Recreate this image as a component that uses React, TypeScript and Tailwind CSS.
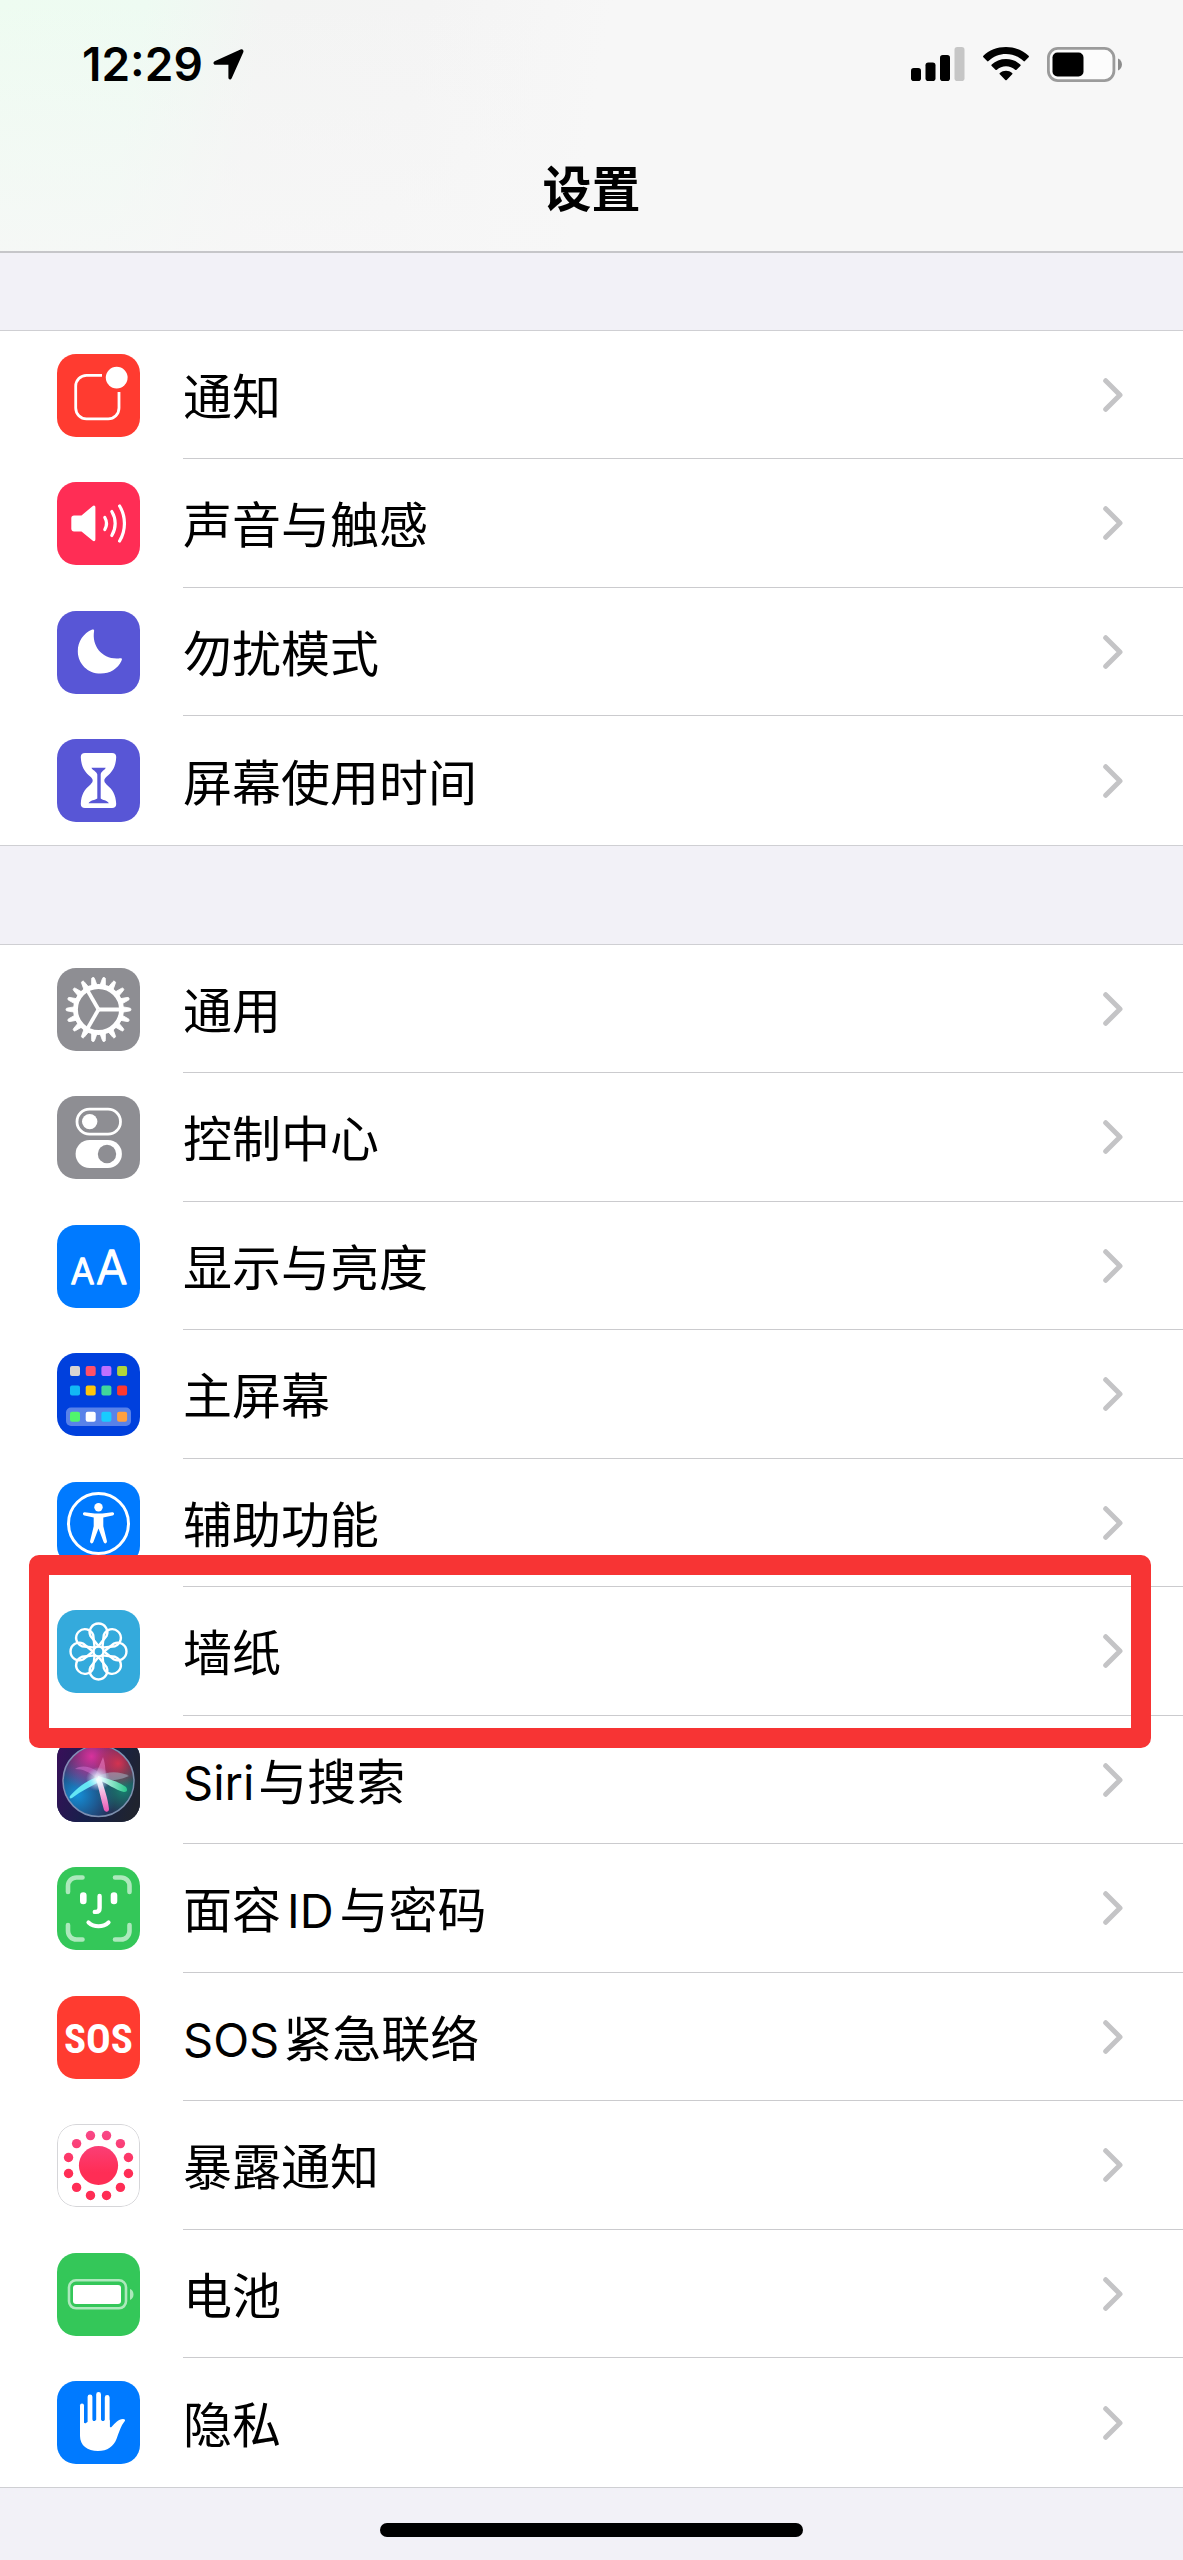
import type { ReactNode } from "react";
import clsx from "clsx";

type Item = {
  label: ReactNode;
  icon: ReactNode;
  background: string;
  highlighted?: boolean;
};

type LatinProps = {
  children: string;
  className?: string;
};

const Latin = ({ children, className = "mr-1" }: LatinProps) => (
  <span className={clsx("text-[47px]", className)}>{children}</span>
);

const NotificationsIcon = () => (
  <>
    <path
      d="M45 21.3H29.5a10.8 10.8 0 0 0-10.8 10.8V54a10.8 10.8 0 0 0 10.8 10.8h21.7A10.8 10.8 0 0 0 62 54V38"
      fill="none"
      stroke="#fff"
      strokeWidth="2.8"
    />
    <circle cx="59.7" cy="23.6" r="10.9" fill="#fff" />
  </>
);

const SoundIcon = () => (
  <>
    <path
      d="M17 33.5h7.5L35.5 24.2c1.5-1.2 2.9-.6 2.9 1.3v31.8c0 1.9-1.4 2.5-2.9 1.3L24.5 49.5H17c-1.6 0-2.7-1.1-2.7-2.7V36.2c0-1.6 1.1-2.7 2.7-2.7z"
      fill="#fff"
    />
    <g fill="none" stroke="#fff" strokeWidth="3.2" strokeLinecap="round">
      <path d="M47.8 35.5a12 12 0 0 1 0 12" />
      <path d="M54.8 29.5a23 23 0 0 1 0 24" />
      <path d="M62.6 24a34 34 0 0 1 0 35" />
    </g>
  </>
);

const MoonIcon = () => (
  <path
    d="M35.2 18.6c1.3-.5 2.2.2 1.9 1.5-2.5 15 8 28.5 24.5 27.4 1.5-.1 2.8-.4 3.2.3.3.5 0 1.3-.4 2.2-3.5 7.7-11.5 12.6-20.7 12.6-12.9 0-22.9-9.8-22.9-22.4 0-9.6 5.7-18 14.4-21.6z"
    fill="#fff"
  />
);

const HourglassIcon = () => (
  <>
    <path
      d="M28 14h27c2.8 0 4.3 1.6 4.2 4.2-.4 9.5-3.7 14.5-9.7 19.6-2.9 2.6-2.9 5 0 7.6 6 5 9.3 10 9.7 19.4.1 2.6-1.4 4.2-4.2 4.2H28c-2.8 0-4.3-1.6-4.2-4.2.4-9.4 3.7-14.4 9.7-19.4 2.9-2.6 2.9-5 0-7.6-6-5.1-9.3-10.1-9.7-19.6C23.7 15.6 25.2 14 28 14z"
      fill="#fff"
    />
    <path
      d="M34.5 28.7h14.2c-.4 2-4.7 3.4-5 6.8v24c1.5 1.5 6.5 1.8 8.2 4.7H31.5c1.7-2.9 6.7-3.2 8.8-4.7v-24c-.9-3.4-5.4-4.8-5.8-6.8z"
      fill="#5856d6"
    />
  </>
);

const GearIcon = () => (
  <g stroke="#fff" fill="none">
    {Array.from({ length: 18 }, (_, i) => (
      <path
        key={i}
        d="M65 38.7L72.5 40a1.5 1.5 0 0 1 0 3L65 44.3z"
        fill="#fff"
        strokeWidth="0.8"
        transform={`rotate(${i * 20} 41.5 41.5)`}
      />
    ))}
    <circle cx="41.5" cy="41.5" r="23" strokeWidth="4.8" />
    {[0, 120, 240].map((angle) => (
      <path
        key={angle}
        d="M41.5 41.5H63"
        strokeWidth="3.8"
        transform={`rotate(${angle} 41.5 41.5)`}
      />
    ))}
  </g>
);

const ControlCenterIcon = () => (
  <>
    <rect
      x="20"
      y="13.2"
      width="43.5"
      height="25"
      rx="12.5"
      fill="none"
      stroke="#fff"
      strokeWidth="2.8"
    />
    <circle cx="32.7" cy="25.6" r="7.7" fill="#fff" />
    <rect x="18.6" y="44" width="46.3" height="28" rx="14" fill="#fff" />
    <circle cx="50" cy="58" r="9.2" fill="#8e8e93" />
  </>
);

const DisplayIcon = () => (
  <g
    className="font-[Inter,sans-serif] font-light"
    fill="#fff"
    stroke="#fff"
    strokeWidth="1.6"
    strokeLinejoin="round"
    textAnchor="middle"
  >
    <text x="25.5" y="58.5" fontSize="35">
      A
    </text>
    <text x="54.8" y="58.5" fontSize="46">
      A
    </text>
  </g>
);

const appColors = [
  ["#d8d4d2", "#ff5069", "#bf70ff", "#b0d53c"],
  ["#12b8f5", "#ffc60a", "#40d69c", "#ff3830"],
  ["#50f56c", "#ffffff", "#18ccff", "#ffa040"],
];

const HomeScreenIcon = () => (
  <>
    <rect x="9" y="54.5" width="65" height="18.5" rx="5" fill="#fff" opacity="0.35" />
    {appColors.map((row, y) =>
      row.map((color, x) => (
        <rect
          key={color}
          x={13 + x * 15.7}
          y={[13, 32.6, 58.7][y]}
          width="10"
          height="10"
          rx="2"
          fill={color}
        />
      ))
    )}
  </>
);

const AccessibilityIcon = () => (
  <>
    <circle cx="41.5" cy="41.5" r="30" fill="none" stroke="#fff" strokeWidth="3" />
    <circle cx="41.5" cy="25.3" r="4.2" fill="#fff" />
    <path
      d="M27.7 30.2l10 1.4h7.6l10-1.4c2.2-.2 2.4 2.9.3 3.3l-9.3 1.9v8.8l3.6 14.9c.5 2.4-2.5 3.2-3.3 1L41.5 46.5l-5.1 13.6c-.8 2.2-3.8 1.4-3.3-1l3.6-14.9v-8.8l-9.3-1.9c-2.1-.4-1.9-3.5.3-3.3z"
      fill="#fff"
    />
  </>
);

const WallpaperIcon = () => (
  <g fill="none" stroke="#fff" strokeWidth="2.4" strokeLinejoin="round">
    {Array.from({ length: 8 }, (_, i) => (
      <path
        key={i}
        d="M41.5 36L33.5 26A8.8 8.8 0 1 1 49.5 26Z"
        transform={`rotate(${i * 45} 41.5 41.5)`}
      />
    ))}
    <circle cx="41.5" cy="41.5" r="5" />
  </g>
);

const SiriIcon = () => (
  <>
    <defs>
      <linearGradient id="siri-back" x1="0" y1="0.3" x2="1" y2="0.6">
        <stop offset="0" stopColor="#351158" />
        <stop offset="0.5" stopColor="#16204a" />
        <stop offset="1" stopColor="#20242f" />
      </linearGradient>
      <radialGradient id="siri-pink" cx="0.4" cy="0.15" r="0.5">
        <stop offset="0" stopColor="#d8329c" />
        <stop offset="1" stopColor="#d8329c" stopOpacity="0" />
      </radialGradient>
      <radialGradient id="siri-red" cx="0.78" cy="0.25" r="0.35">
        <stop offset="0" stopColor="#d43350" />
        <stop offset="1" stopColor="#d43350" stopOpacity="0" />
      </radialGradient>
      <radialGradient id="siri-blue" cx="0.2" cy="0.7" r="0.55">
        <stop offset="0" stopColor="#148fd8" />
        <stop offset="1" stopColor="#148fd8" stopOpacity="0" />
      </radialGradient>
      <radialGradient id="siri-teal" cx="0.85" cy="0.62" r="0.4">
        <stop offset="0" stopColor="#17806f" />
        <stop offset="1" stopColor="#17806f" stopOpacity="0" />
      </radialGradient>
      <radialGradient id="siri-core">
        <stop offset="0" stopColor="#fff" />
        <stop offset="0.35" stopColor="#e3fbff" stopOpacity="0.7" />
        <stop offset="1" stopColor="#a6e8ff" stopOpacity="0" />
      </radialGradient>
      <linearGradient id="siri-mint" x1="0" x2="1">
        <stop offset="0" stopColor="#e8ffff" />
        <stop offset="1" stopColor="#28c78c" />
      </linearGradient>
      <linearGradient id="siri-rose" x1="0" y1="0" x2="0" y2="1">
        <stop offset="0" stopColor="#fff" />
        <stop offset="1" stopColor="#e854b4" />
      </linearGradient>
    </defs>
    <rect width="83" height="83" fill="url(#siri-back)" />
    <circle cx="41.5" cy="42" r="35" fill="#262a52" />
    <circle cx="41.5" cy="42" r="35" fill="url(#siri-blue)" />
    <circle cx="41.5" cy="42" r="35" fill="url(#siri-teal)" />
    <circle cx="41.5" cy="42" r="35" fill="url(#siri-pink)" />
    <circle cx="41.5" cy="42" r="35" fill="url(#siri-red)" />
    <path d="M36 42C39 34 43 26 46 18c3 8 2 16 4 23z" fill="#f48ad2" opacity="0.5" />
    <path d="M40 40C33 33 26 30 18 30c8-5 20-2 28 8z" fill="#e07bdb" opacity="0.45" />
    <path d="M40 38c10-6 22-6 32-1-8 4-20 5-30 5z" fill="#a9bfd0" opacity="0.5" />
    <path d="M44 38C34 38 21 48 13 57c-1 2 0 3 2 2 9-7 20-12 29-17z" fill="#64e6f5" />
    <path d="M41 37c10 3 20 5 28 11 2 3 1 5-2 5-9-2-17-9-26-12z" fill="url(#siri-mint)" />
    <path d="M39 40c3 10 5 21 8 31 2 3 5 2 5-1-1-11-5-21-8-31z" fill="url(#siri-rose)" />
    <circle cx="41" cy="40" r="12" fill="url(#siri-core)" />
    <circle cx="41.5" cy="42" r="35.5" fill="none" stroke="#9db4d6" strokeWidth="1.5" opacity="0.75" />
  </>
);

const FaceIdIcon = () => (
  <g fill="none" stroke="#fff" strokeLinecap="round">
    <path
      d="M11 25V19a8.5 8.5 0 0 1 8.5-8.5h6M58 10.5h6a8.5 8.5 0 0 1 8.5 8.5v6M72.5 58v6a8.5 8.5 0 0 1-8.5 8.5h-6M25.5 72.5h-6A8.5 8.5 0 0 1 11 64v-6"
      strokeWidth="4.6"
      opacity="0.6"
    />
    <path d="M26.3 28.5v5.5M57 28.5v5.5" strokeWidth="6.6" />
    <path d="M42.6 29v12c0 2.5-1.3 3.9-3.5 3.9h-1.3" strokeWidth="4.4" />
    <path d="M31.5 55.5c5.5 5 14.5 5 20 0" strokeWidth="4.2" />
  </g>
);

const SosIcon = () => (
  <text
    x="41.5"
    y="56.5"
    fontSize="41"
    textAnchor="middle"
    fill="#fff"
    className="font-['Roboto_Condensed','Liberation_Sans_Narrow',Roboto,sans-serif] font-bold"
  >
    SOS
  </text>
);

const ExposureIcon = () => (
  <>
    <defs>
      <linearGradient id="exposure" gradientUnits="userSpaceOnUse" x1="0" y1="8" x2="0" y2="76">
        <stop offset="0" stopColor="#f84887" />
        <stop offset="0.6" stopColor="#ff2d55" />
      </linearGradient>
    </defs>
    <rect x="0.5" y="0.5" width="82" height="82" rx="18.5" fill="#fff" stroke="#d6d6d9" />
    <g fill="url(#exposure)">
      <circle cx="41.5" cy="41.5" r="19.6" />
      {Array.from({ length: 12 }, (_, i) => {
        const angle = ((i * 30 + 15) * Math.PI) / 180;
        return (
          <circle
            key={i}
            cx={41.5 + Math.cos(angle) * 31}
            cy={41.5 + Math.sin(angle) * 31}
            r="4.7"
          />
        );
      })}
    </g>
  </>
);

const BatteryIcon = () => (
  <>
    <rect
      x="12"
      y="27.3"
      width="57"
      height="28"
      rx="7"
      fill="none"
      stroke="#fff"
      strokeWidth="2.6"
      opacity="0.6"
    />
    <rect x="16" y="32" width="48" height="19" rx="3" fill="#fff" />
    <path d="M73 36c4.7 1.5 4.7 9.3 0 11z" fill="#fff" opacity="0.6" />
  </>
);

const PrivacyIcon = () => (
  <>
    <path
      d="M23 38v17c0 9.5 7.5 15 18 15 9.5 0 15.5-4.5 18.5-12 2.3-6 4.5-13.5 8-17.5 1.3-1.6.3-2.7-1.7-2.6-4.3.2-7.5 3.8-11.3 8-.9.9-1.7.4-1.7-1V38c-.2 2.8-4.2 2.8-4.7 0-.4 2.8-3.8 2.8-4.2 0-.4 2.8-4.2 2.8-4.7 0-.4 2.8-3.8 2.8-4.2 0l-.6 1.2c-.4 2.3-3.4 3-4.3 1.5-.8 2.5-3.9 1.5-4.3-.7L26.8 38z"
      fill="#fff"
    />
    <g fill="none" stroke="#fff" strokeLinecap="round">
      <path d="M25 24.5V45" strokeWidth="4" />
      <path d="M33 15.8V45M41.6 13.4V45M50.2 16.4V45" strokeWidth="4.8" />
    </g>
  </>
);

const alerts: Item[] = [
  { label: "通知", icon: <NotificationsIcon />, background: "bg-[#ff3b30]" },
  { label: "声音与触感", icon: <SoundIcon />, background: "bg-[#ff2d55]" },
  { label: "勿扰模式", icon: <MoonIcon />, background: "bg-[#5856d6]" },
  { label: "屏幕使用时间", icon: <HourglassIcon />, background: "bg-[#5856d6]" },
];

const system: Item[] = [
  { label: "通用", icon: <GearIcon />, background: "bg-[#8e8e93]" },
  { label: "控制中心", icon: <ControlCenterIcon />, background: "bg-[#8e8e93]" },
  { label: "显示与亮度", icon: <DisplayIcon />, background: "bg-[#007aff]" },
  { label: "主屏幕", icon: <HomeScreenIcon />, background: "bg-[#0040dd]" },
  { label: "辅助功能", icon: <AccessibilityIcon />, background: "bg-[#007aff]" },
  {
    label: "墙纸",
    icon: <WallpaperIcon />,
    background: "bg-[#34aadc]",
    highlighted: true,
  },
  {
    label: (
      <>
        <Latin>Siri</Latin>与搜索
      </>
    ),
    icon: <SiriIcon />,
    background: "bg-[#16204a]",
  },
  {
    label: (
      <>
        面容<Latin className="mx-1.5">ID</Latin>与密码
      </>
    ),
    icon: <FaceIdIcon />,
    background: "bg-[#34c759]",
  },
  {
    label: (
      <>
        <Latin>SOS</Latin>紧急联络
      </>
    ),
    icon: <SosIcon />,
    background: "bg-[#ff3b30]",
  },
  { label: "暴露通知", icon: <ExposureIcon />, background: "bg-white" },
  { label: "电池", icon: <BatteryIcon />, background: "bg-[#34c759]" },
  { label: "隐私", icon: <PrivacyIcon />, background: "bg-[#007aff]" },
];

const Chevron = () => (
  <svg viewBox="0 0 20 34" className="h-[34px] w-5 shrink-0" aria-hidden>
    <path
      d="M2.7 2.7L17 17L2.7 31.3"
      fill="none"
      stroke="#c4c4c6"
      strokeWidth="5"
      strokeLinecap="round"
      strokeLinejoin="round"
    />
  </svg>
);

const SettingsGroup = ({ items }: { items: Item[] }) => (
  <ul className="border-y border-[#cfcfd3] bg-white">
    {items.map(({ label, icon, background, highlighted }, index) => (
      <li key={index} className="group relative">
        <a
          href="#"
          className="flex min-h-32 items-stretch pl-[57px] group-even:min-h-[129px]"
        >
          <span className="flex w-[126px] shrink-0 items-center">
            <svg
              viewBox="0 0 83 83"
              className={clsx("size-[83px] rounded-[19px]", background)}
              aria-hidden
            >
              {icon}
            </svg>
          </span>
          <span className="flex grow items-center justify-between border-b border-[#cbcbce] pr-[60px] group-last:border-b-0">
            <span className="pt-1.5 text-[49px] leading-[60px]">{label}</span>
            <Chevron />
          </span>
        </a>
        {highlighted && (
          <span className="pointer-events-none absolute -top-8 right-8 -bottom-8 left-[29px] z-10 rounded-[10px] border-20 border-[#f73434]" />
        )}
      </li>
    ))}
  </ul>
);

const StatusBar = () => (
  <div className="flex h-32 items-center justify-between pr-[60px] pl-[82px]">
    <div className="flex items-center gap-2.5">
      <time className="text-[46px] leading-none font-semibold">12:29</time>
      <svg viewBox="0 0 31 31" className="size-[31px]" aria-hidden>
        <path
          d="M1.6 12.2L27.5.6c2-.8 3.5.6 2.8 2.7L18.7 29.2c-.9 1.9-3.3 1.6-3.3-.6V15.8H2.6c-2.4 0-2.8-2.7-1-3.6z"
          fill="#000"
        />
      </svg>
    </div>
    <div className="flex items-center gap-[18px]">
      <svg viewBox="0 0 54 34" className="h-[34px] w-[54px]" aria-hidden>
        <rect x="0" y="21" width="10" height="13" rx="2.8" />
        <rect x="14.5" y="15.5" width="10" height="18.5" rx="2.8" />
        <rect x="29" y="8" width="10" height="26" rx="2.8" />
        <rect x="43.5" y="0" width="10" height="34" rx="2.8" fill="#c6c6c6" />
      </svg>
      <svg viewBox="0 0 46 34" className="h-[34px] w-[46px]" aria-hidden>
        <path d="M23 0c8.9 0 17 3.3 22.6 8.8.5.5.5 1 0 1.5l-3.7 3.8c-.4.4-1 .4-1.4 0C35.8 9.6 29.5 7 23 7S10.2 9.6 5.5 14.1c-.4.4-1 .4-1.4 0L.4 10.3c-.5-.5-.5-1 0-1.5C6 3.3 14.1 0 23 0z" />
        <path d="M23 12c5.6 0 10.5 2 14.3 5.5.5.5.5 1 0 1.5l-3.8 3.8c-.4.4-.9.4-1.4 0-2.5-2.3-5.6-3.6-9.1-3.6s-6.6 1.3-9.1 3.6c-.5.4-1 .4-1.4 0L8.7 19c-.5-.5-.5-1 0-1.5C12.5 14 17.4 12 23 12z" />
        <path d="M23 23.7c2.3 0 4.4.8 6.1 2.2.5.4.5 1 .1 1.4l-5.5 5.6c-.4.4-1 .4-1.4 0l-5.5-5.6c-.4-.4-.4-1 .1-1.4 1.7-1.4 3.8-2.2 6.1-2.2z" />
      </svg>
      <svg viewBox="0 0 76 35" className="h-[35px] w-[76px]" aria-hidden>
        <rect
          x="1.4"
          y="1.4"
          width="65.5"
          height="32.2"
          rx="9.5"
          fill="#fcfcfc"
          stroke="#9b9b9b"
          strokeWidth="2.8"
        />
        <rect x="5.5" y="5.5" width="31" height="24" rx="5" />
        <path d="M71 11.5c5.3 2.2 5.3 9.8 0 12z" fill="#8c8c8c" />
      </svg>
    </div>
  </div>
);

export default function App() {
  return (
    <div className="min-h-screen bg-[#f2f1f7] font-[Inter,'Noto_Sans_CJK_SC',sans-serif] text-black">
      <header className="border-b-2 border-[#c6c6c9] bg-[#f7f7f7] bg-[linear-gradient(to_bottom,transparent,#f7f7f7cc),linear-gradient(100deg,#eefcf1_0%,#eefbf2_12%,#f3f4f3_22%,#f4f4f4_35%,#f7f7f7_50%)]">
        <StatusBar />
        <h1 className="pt-8 pb-8 text-center text-[49px] leading-[59px] font-bold">
          设置
        </h1>
      </header>
      <main className="flex flex-col gap-[98px] pt-[77px]">
        <SettingsGroup items={alerts} />
        <SettingsGroup items={system} />
      </main>
      <footer className="flex justify-center pt-[35px] pb-[23px]">
        <div className="h-[14px] w-[423px] rounded-full bg-black" />
      </footer>
    </div>
  );
}
